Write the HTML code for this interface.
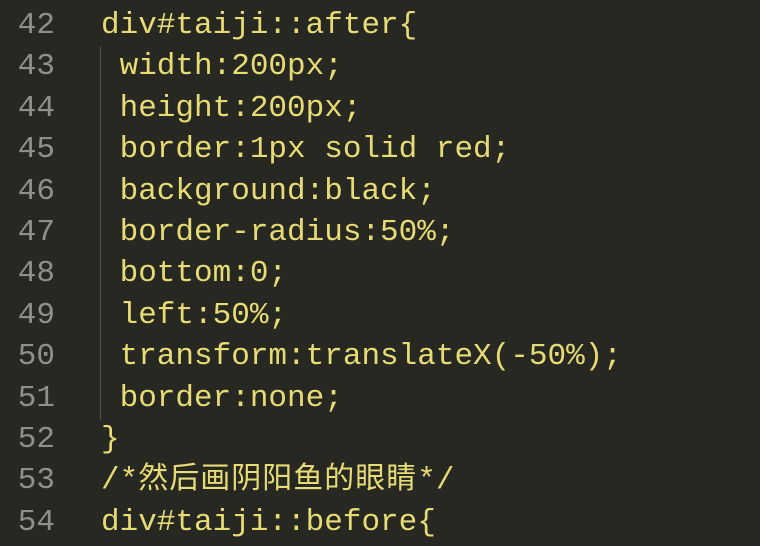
<!DOCTYPE html>
<html><head><meta charset="utf-8"><style>
html,body{margin:0;padding:0;background:#272822;width:760px;height:546px;overflow:hidden}
.wrap{position:absolute;top:5px;left:0}
.l{position:relative;height:41.4px;line-height:41.4px;white-space:pre;font-family:"Liberation Mono","Noto Sans CJK SC",monospace;font-size:31px;color:#e6db74}
.n{position:absolute;left:0;width:55px;text-align:right;color:#8f908a}
.c{position:absolute;left:101px}
.cj{font-size:30px;letter-spacing:1px}
.guide{position:absolute;left:100px;top:46px;width:1px;height:374px;background:#555650}
</style></head><body>
<div class="guide"></div>
<div class="wrap">
<div class="l"><span class="n">42</span><span class="c">div#taiji::after{</span></div>
<div class="l"><span class="n">43</span><span class="c"> width:200px;</span></div>
<div class="l"><span class="n">44</span><span class="c"> height:200px;</span></div>
<div class="l"><span class="n">45</span><span class="c"> border:1px solid red;</span></div>
<div class="l"><span class="n">46</span><span class="c"> background:black;</span></div>
<div class="l"><span class="n">47</span><span class="c"> border-radius:50%;</span></div>
<div class="l"><span class="n">48</span><span class="c"> bottom:0;</span></div>
<div class="l"><span class="n">49</span><span class="c"> left:50%;</span></div>
<div class="l"><span class="n">50</span><span class="c"> transform:translateX(-50%);</span></div>
<div class="l"><span class="n">51</span><span class="c"> border:none;</span></div>
<div class="l"><span class="n">52</span><span class="c">}</span></div>
<div class="l"><span class="n">53</span><span class="c">/*<span class="cj">然后画阴阳鱼的眼睛</span>*/</span></div>
<div class="l"><span class="n">54</span><span class="c">div#taiji::before{</span></div>
</div>
</body></html>
